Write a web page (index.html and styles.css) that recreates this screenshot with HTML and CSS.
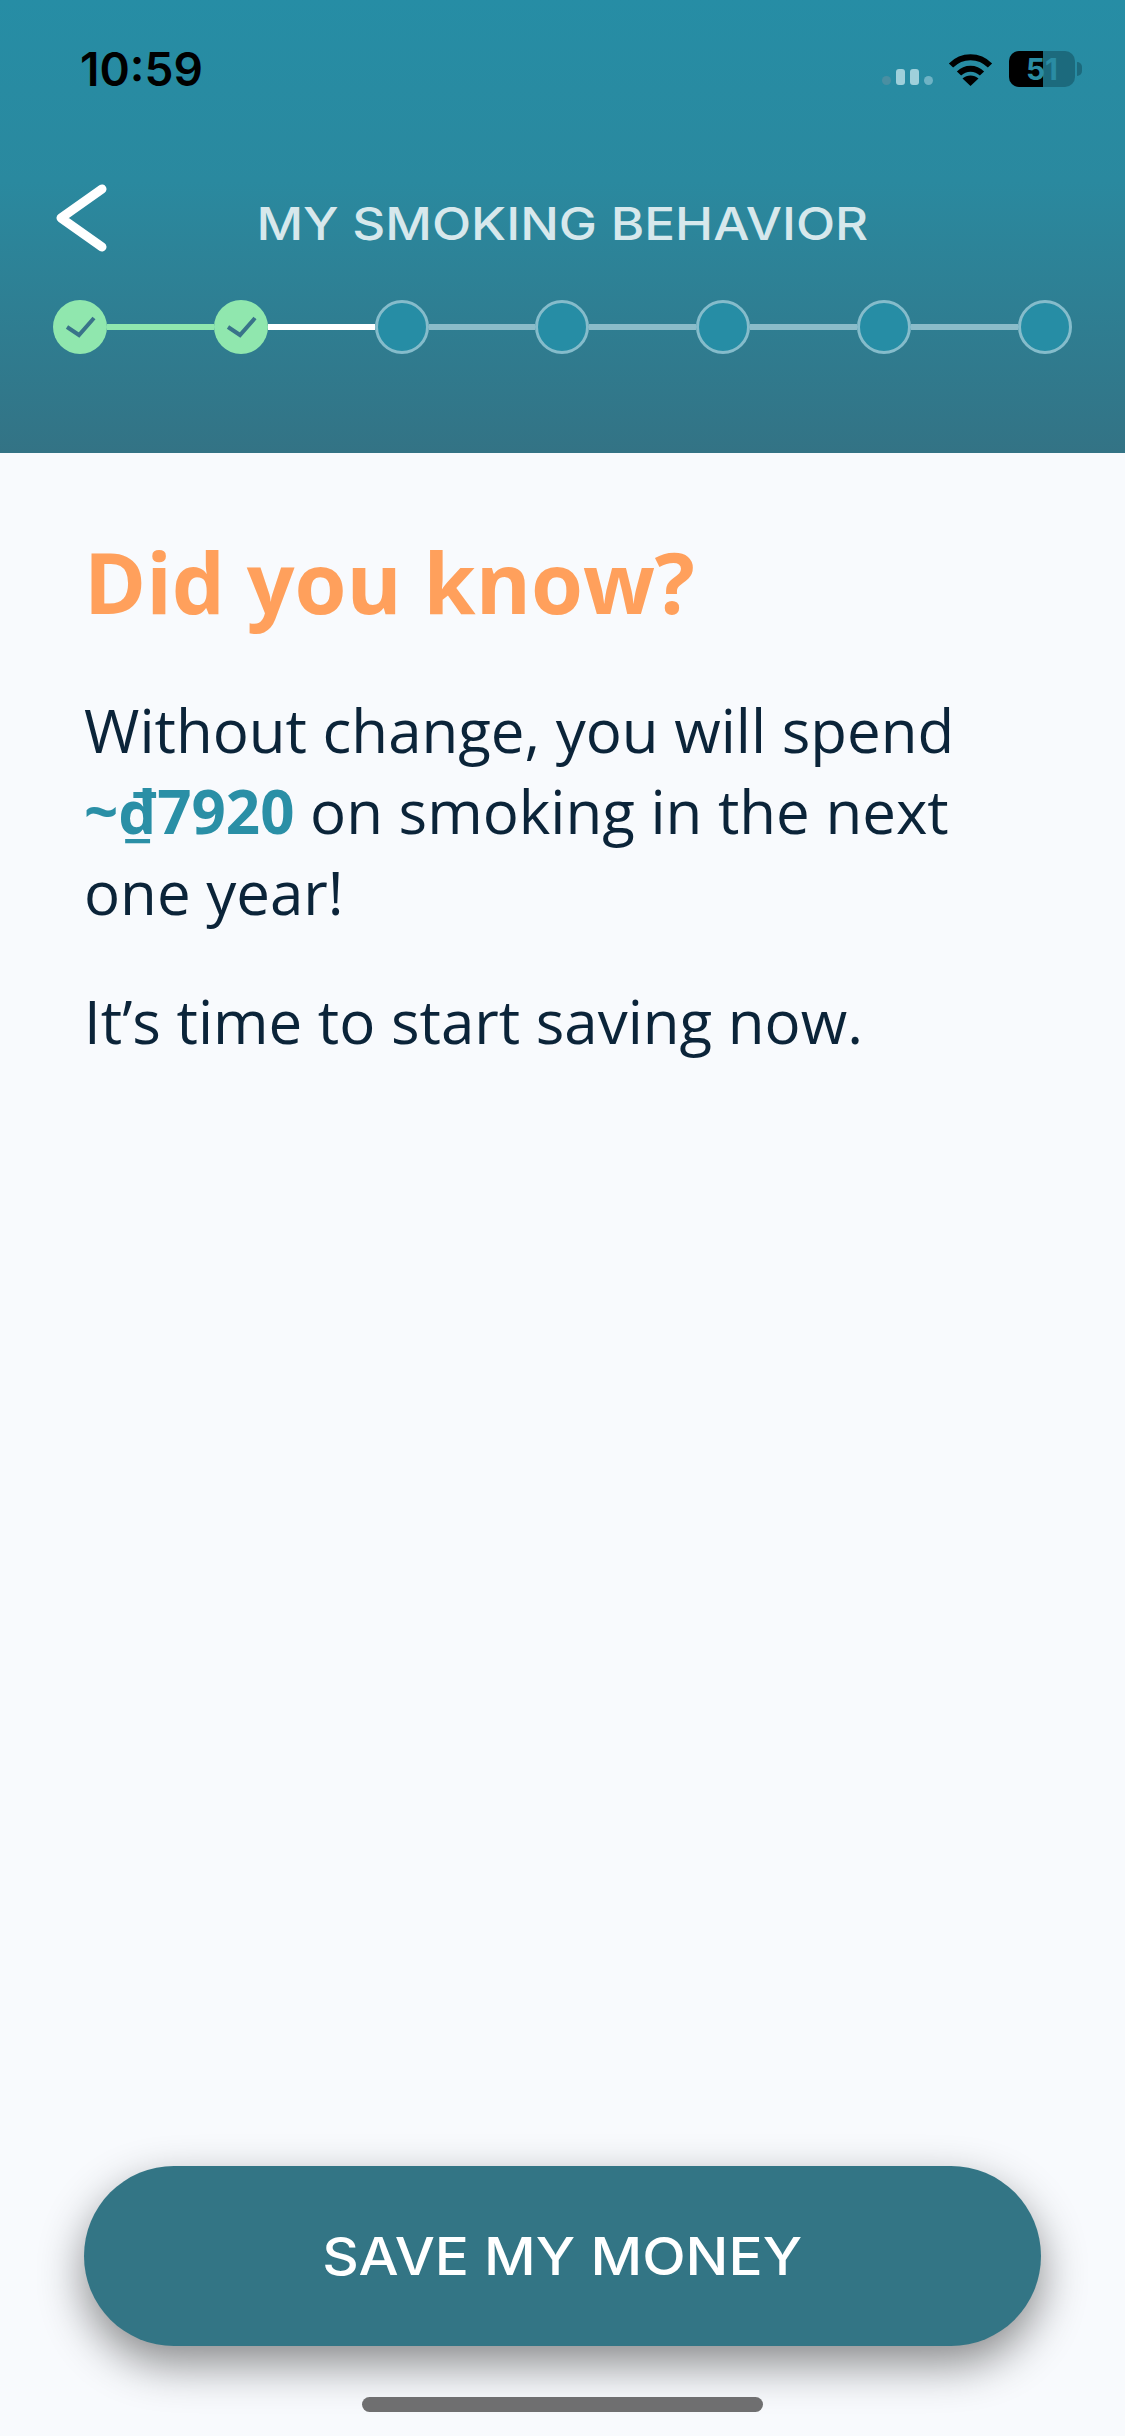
FILE: index.html
```html
<!DOCTYPE html>
<html lang="en">
<head>
    <meta charset="UTF-8">
    <meta name="viewport" content="width=device-width, initial-scale=1.0">
    <title>My Smoking Behavior</title>
    <link rel="stylesheet" href="styles.css">
</head>
<body>
    <div class="page">
        <header class="header">
            <div class="status-bar">
                <span class="time">10:59</span>
                <div class="status-icons">
                    <div class="signal">
                        <span class="dot dim"></span>
                        <span class="bar"></span>
                        <span class="bar"></span>
                        <span class="dot"></span>
                    </div>
                    <svg class="wifi" viewBox="0 0 45 33" width="45" height="33">
                        <path d="M3 12.5C14 1.5 31 1.5 42 12.5" fill="none" stroke="#000" stroke-width="6"/>
                        <path d="M11 20.5C17.5 14 27.5 14 34 20.5" fill="none" stroke="#000" stroke-width="6"/>
                        <path d="M22.5 33L14.5 25.5C19 21.5 26 21.5 30.5 25.5Z" fill="#000"/>
                    </svg>
                    <div class="battery">
                        <div class="battery-body">
                            <div class="battery-fill"></div>
                            <span class="battery-level">51</span>
                        </div>
                        <span class="battery-nub"></span>
                    </div>
                </div>
            </div>

            <div class="nav">
                <svg class="back" viewBox="0 0 54 70" width="54" height="70">
                    <path d="M49 6L8 35L49 64" fill="none" stroke="#fff" stroke-width="9" stroke-linecap="round" stroke-linejoin="round"/>
                </svg>
                <h2 class="title">MY SMOKING BEHAVIOR</h2>
                <span></span>
            </div>

            <div class="stepper">
                <span class="step done">
                    <svg viewBox="0 0 54 54" width="54" height="54"><path d="M14 27L26 35L41 18" fill="none" stroke="#39738a" stroke-width="4"/></svg>
                </span>
                <span class="line done"></span>
                <span class="step done">
                    <svg viewBox="0 0 54 54" width="54" height="54"><path d="M14 27L26 35L41 18" fill="none" stroke="#39738a" stroke-width="4"/></svg>
                </span>
                <span class="line current"></span>
                <span class="step"></span>
                <span class="line"></span>
                <span class="step"></span>
                <span class="line"></span>
                <span class="step"></span>
                <span class="line"></span>
                <span class="step"></span>
                <span class="line"></span>
                <span class="step"></span>
            </div>
        </header>

        <main class="content">
            <h1 class="heading">Did you know?</h1>
            <p class="text">Without change, you will spend<br><strong class="amount">~₫7920</strong> on smoking in the next<br>one year!</p>
            <p class="text">It’s time to start saving now.</p>
        </main>

        <footer class="footer">
            <button class="save-btn"><span class="save-label">SAVE MY MONEY</span></button>
            <div class="home-indicator"></div>
        </footer>
    </div>
</body>
</html>
```

FILE: styles.css
```css
body {
    margin: 0;
    background-color: #f8fafd;
    font-family: "Open Sans", sans-serif;
}
.page {
    display: flex;
    flex-direction: column;
    height: 2436px;
    overflow: hidden;
}
.header {
    height: 453px;
    box-sizing: border-box;
    background: linear-gradient(180deg, #268da5 0%, #2a899f 40%, #337385 100%);
}
.status-bar {
    display: flex;
    justify-content: space-between;
    align-items: center;
    height: 36px;
    padding: 51px 43px 0 80px;
}
.time {
    font-family: Inter, sans-serif;
    font-size: 46px;
    font-weight: 600;
    color: #000;
}
.status-icons {
    display: flex;
    align-items: center;
}
.signal {
    display: flex;
    align-items: flex-end;
    gap: 5px;
    margin-right: 15px;
    padding-top: 16px;
}
.signal .bar {
    width: 9px;
    height: 16px;
    border-radius: 3px;
    background-color: #9fd0db;
}
.signal .dot {
    width: 9px;
    height: 9px;
    border-radius: 50%;
    background-color: #6fb3c5;
}
.signal .dot.dim {
    background-color: #4a8fa2;
}
.wifi {
    margin-right: 16px;
}
.battery {
    display: flex;
    align-items: center;
    gap: 2px;
}
.battery-body {
    position: relative;
    width: 66px;
    height: 36px;
    border-radius: 10px;
    overflow: hidden;
    background-color: #1c6a7d;
    text-align: center;
}
.battery-fill {
    width: 34px;
    height: 36px;
    background-color: #000;
}
.battery-level {
    position: absolute;
    top: 0;
    left: 0;
    width: 66px;
    font-family: Inter, sans-serif;
    font-size: 30px;
    font-weight: 700;
    line-height: 36px;
    color: #2a8ca3;
}
.battery-nub {
    width: 5px;
    height: 14px;
    border-radius: 0 5px 5px 0;
    background-color: #1c6a7d;
}
.nav {
    display: grid;
    grid-template-columns: 1fr auto 1fr;
    align-items: center;
    height: 70px;
    margin-top: 96px;
    padding: 0 53px;
}
.back {
    display: block;
}
.title {
    margin: 11px 0 0;
    font-family: Inter, sans-serif;
    font-size: 45px;
    font-weight: 500;
    color: #d7e8ec;
    transform: scaleX(1.136);
}
.stepper {
    display: flex;
    align-items: center;
    margin-top: 47px;
    padding: 0 53px;
}
.step {
    flex: none;
    width: 54px;
    height: 54px;
    box-sizing: border-box;
    border: 3px solid #85bccb;
    border-radius: 50%;
    background-color: #268da5;
}
.step.done {
    border: none;
    background-color: #90e7ae;
}
.step svg {
    display: block;
}
.line {
    flex: 1;
    height: 6px;
    background-color: #8bbcc9;
}
.line.done {
    background-color: #90e7ae;
}
.line.current {
    background-color: #fff;
}
.content {
    flex: 1;
    padding: 0 84px;
}
.heading {
    margin: 71px 0 0;
    font-size: 84px;
    font-weight: 700;
    line-height: 115px;
    color: #ffa05c;
}
.text {
    margin: 48px 0 0;
    font-size: 60px;
    line-height: 81px;
    color: #0b2439;
}
.heading + .text {
    margin-top: 51px;
}
.amount {
    color: #2a8fa6;
}
.footer {
    display: flex;
    flex-direction: column;
    align-items: center;
}
.save-btn {
    width: 957px;
    height: 180px;
    border: none;
    border-radius: 90px;
    background-color: #337585;
    box-shadow: 0 18px 45px rgba(0,0,0,0.45);
    font-family: Inter, sans-serif;
    font-size: 52px;
    font-weight: 500;
    color: white;
}
.save-label {
    display: inline-block;
    transform: scaleX(1.09);
}
.home-indicator {
    width: 401px;
    height: 15px;
    margin: 51px 0 24px;
    border-radius: 8px;
    background-color: #6f6f70;
}
```
